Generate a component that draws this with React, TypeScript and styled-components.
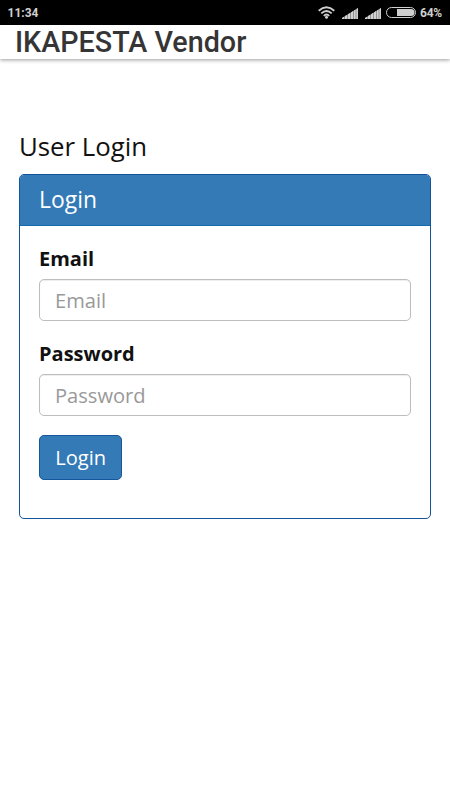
import React from 'react';
import styled, { createGlobalStyle } from 'styled-components';

const GlobalStyle = createGlobalStyle`
  * { box-sizing: border-box; }
  body { margin: 0; background: #fff; font-family: "Open Sans", sans-serif; color: #111; }
`;

const Screen = styled.div`
  width: 100%;
  min-height: 800px;
  background: #fff;
  overflow: hidden;
`;

const StatusBar = styled.div`
  display: flex;
  align-items: center;
  justify-content: space-between;
  height: 25px;
  padding: 0 8px 0 7.5px;
  background: #000;
  color: #cfcfcf;
`;

const StatusText = styled.span`
  font: 700 12px/25px Roboto, sans-serif;
  padding-top: 1px;
`;

const BatteryText = styled(StatusText)`
  letter-spacing: -0.2px;
`;

const StatusIcons = styled.div`
  display: flex;
  align-items: center;
  height: 25px;

  svg { display: block; }
`;

const AppBar = styled.header`
  height: 34px;
  padding-left: 15px;
  background: #fff;
  box-shadow: 0 1px 4px rgba(0, 0, 0, 0.4);
`;

const AppTitle = styled.div`
  font: 500 28.7px/34px Roboto, sans-serif;
  color: #353535;
  white-space: nowrap;
`;

const Content = styled.main`
  padding: 69px 19px 0;
`;

const Heading = styled.h1`
  margin: 0 0 10px;
  font-size: 25.8px;
  font-weight: 400;
  line-height: 36px;
`;

const Panel = styled.section`
  height: 345px;
  border: 1px solid #14549b;
  border-radius: 5px;
  overflow: hidden;
`;

const PanelHeader = styled.div`
  height: 51px;
  padding-left: 19px;
  background: #337ab7;
  border-bottom: 1px solid #106bb0;
  color: #fff;
  font-size: 22.9px;
  font-weight: 400;
  line-height: 49px;
`;

const Form = styled.form`
  padding: 19px 19px 0;
`;

const Field = styled.div`
  margin-bottom: 19px;
`;

const Label = styled.label`
  display: block;
  height: 28px;
  margin-bottom: 6px;
  font-size: 20px;
  font-weight: 700;
  line-height: 28px;
`;

const Input = styled.input`
  display: block;
  width: 100%;
  height: 42px;
  padding: 0 15px;
  border: 1px solid #bdbdbd;
  border-radius: 5px;
  background: #fff;
  box-shadow: inset 0 1px 1px rgba(0, 0, 0, 0.075);
  font: 400 20.1px "Open Sans", sans-serif;
  outline: none;

  &::placeholder { color: #999; opacity: 1; }
`;

const SubmitButton = styled.button`
  display: block;
  width: 83.4px;
  height: 45px;
  padding: 0 0 1px;
  border: 1px solid #16579c;
  border-radius: 5px;
  background: #337ab7;
  color: #fff;
  font: 400 20.1px "Open Sans", sans-serif;
`;

const WifiIcon = () => (
  <svg width="17" height="13" viewBox="0 0 17 13" fill="none" stroke="#d0d0d0" strokeWidth="1.8">
    <path d="M.7 4.7Q8.5-2.1 16.3 4.7M3.3 7.4Q8.5 2.5 13.7 7.4M5.8 9.9Q8.5 7.1 11.2 9.9" />
    <circle cx="8.5" cy="11.3" r="1.5" fill="#d0d0d0" stroke="none" />
  </svg>
);

const SignalIcon = () => (
  <svg width="16" height="11" viewBox="0 0 16 11">
    <path d="M0 11V10L16 0v11z" fill="#929292" />
    <path d="M0 11v-1l2-1.2V11zM3 11V8.1l2-1.2V11zM6 11V6.2L8 5v6zM9 11V4.4l2-1.3V11zM12 11V2.5l1.5-1V11zM14.5 11V1L16 0v11z" fill="#d0d0d0" />
  </svg>
);

const BatteryIcon = () => (
  <svg width="30" height="11" viewBox="0 0 30 11">
    <rect x="0.5" y="0.5" width="29" height="10" rx="5" fill="none" stroke="#cfcfcf" />
    <path d="M11 2h14a3.5 3.5 0 0 1 0 7H11z" fill="#cfcfcf" />
  </svg>
);

const WifiSlot = styled.span`margin-right: 7px;`;
const SignalSlot = styled.span`margin-right: 7px; padding-top: 1px;`;
const BatterySlot = styled.span`margin: 0 4px 0 -2px;`;

export default function App() {
  return (
    <Screen>
      <GlobalStyle />
      <StatusBar>
        <StatusText>11:34</StatusText>
        <StatusIcons>
          <WifiSlot><WifiIcon /></WifiSlot>
          <SignalSlot><SignalIcon /></SignalSlot>
          <SignalSlot><SignalIcon /></SignalSlot>
          <BatterySlot><BatteryIcon /></BatterySlot>
          <BatteryText>64%</BatteryText>
        </StatusIcons>
      </StatusBar>
      <AppBar>
        <AppTitle>IKAPESTA Vendor</AppTitle>
      </AppBar>
      <Content>
        <Heading>User Login</Heading>
        <Panel>
          <PanelHeader>Login</PanelHeader>
          <Form onSubmit={(event) => event.preventDefault()}>
            <Field>
              <Label htmlFor="email">Email</Label>
              <Input id="email" type="email" placeholder="Email" />
            </Field>
            <Field>
              <Label htmlFor="password">Password</Label>
              <Input id="password" type="password" placeholder="Password" />
            </Field>
            <SubmitButton type="submit">Login</SubmitButton>
          </Form>
        </Panel>
      </Content>
    </Screen>
  );
}
